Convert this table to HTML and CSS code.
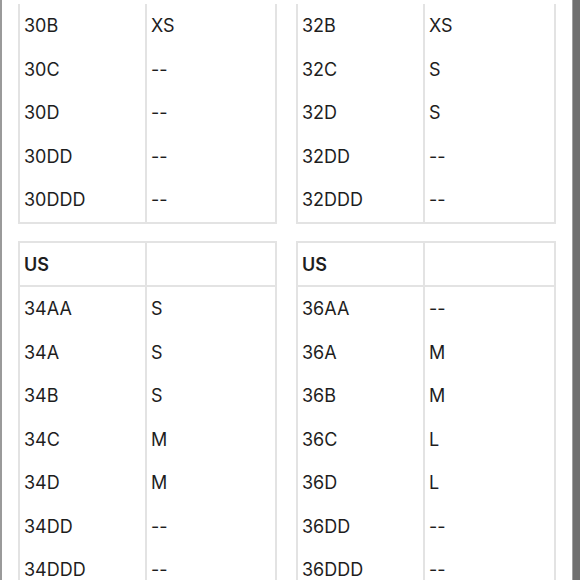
FILE: index.html
```html
<!DOCTYPE html>
<html>
<head>
<meta charset="utf-8">
<link rel="stylesheet" href="styles.css">
</head>
<body>
<div class="frame">
  <div class="edge-left"></div>
  <main class="content">
    <div class="grid">
      <div class="table cont">
        <div class="row"><div class="cell">30B</div><div class="cell">XS</div></div>
        <div class="row"><div class="cell">30C</div><div class="cell">--</div></div>
        <div class="row"><div class="cell">30D</div><div class="cell">--</div></div>
        <div class="row"><div class="cell">30DD</div><div class="cell">--</div></div>
        <div class="row"><div class="cell">30DDD</div><div class="cell">--</div></div>
      </div>
      <div class="table cont">
        <div class="row"><div class="cell">32B</div><div class="cell">XS</div></div>
        <div class="row"><div class="cell">32C</div><div class="cell">S</div></div>
        <div class="row"><div class="cell">32D</div><div class="cell">S</div></div>
        <div class="row"><div class="cell">32DD</div><div class="cell">--</div></div>
        <div class="row"><div class="cell">32DDD</div><div class="cell">--</div></div>
      </div>
      <div class="table">
        <div class="row head"><div class="cell">US</div><div class="cell"></div></div>
        <div class="row"><div class="cell">34AA</div><div class="cell">S</div></div>
        <div class="row"><div class="cell">34A</div><div class="cell">S</div></div>
        <div class="row"><div class="cell">34B</div><div class="cell">S</div></div>
        <div class="row"><div class="cell">34C</div><div class="cell">M</div></div>
        <div class="row"><div class="cell">34D</div><div class="cell">M</div></div>
        <div class="row"><div class="cell">34DD</div><div class="cell">--</div></div>
        <div class="row"><div class="cell">34DDD</div><div class="cell">--</div></div>
      </div>
      <div class="table">
        <div class="row head"><div class="cell">US</div><div class="cell"></div></div>
        <div class="row"><div class="cell">36AA</div><div class="cell">--</div></div>
        <div class="row"><div class="cell">36A</div><div class="cell">M</div></div>
        <div class="row"><div class="cell">36B</div><div class="cell">M</div></div>
        <div class="row"><div class="cell">36C</div><div class="cell">L</div></div>
        <div class="row"><div class="cell">36D</div><div class="cell">L</div></div>
        <div class="row"><div class="cell">36DD</div><div class="cell">--</div></div>
        <div class="row"><div class="cell">36DDD</div><div class="cell">--</div></div>
      </div>
    </div>
  </main>
  <div class="edge-right"></div>
</div>
</body>
</html>
```
FILE: styles.css
```css
html, body {
  margin: 0;
  padding: 0;
  background: #ffffff;
}
body {
  width: 580px;
  height: 580px;
  overflow: hidden;
  font-family: Inter, "Liberation Sans", sans-serif;
  font-size: 18px;
  color: #1e1e1e;
}
.frame {
  display: flex;
  height: 580px;
}
.edge-left {
  width: 2px;
  background: #9a9a9a;
  flex: none;
}
.edge-right {
  width: 7px;
  background: #6f6f6f;
  border-left: 1px solid #a0a0a0;
  flex: none;
}
.content {
  flex: 1;
  padding: 4px 16px 0 16px;
  box-sizing: border-box;
}
.grid {
  display: grid;
  grid-template-columns: 259px 260px;
  column-gap: 19px;
  row-gap: 17.5px;
  align-items: start;
}
.table {
  border: 2px solid #e3e3e3;
}
.table.cont {
  border-top: none;
}
.row {
  display: grid;
  grid-template-columns: 127px 1fr;
  height: 43.5px;
}
.row.head {
  height: 42px;
  border-bottom: 2px solid #e3e3e3;
  font-weight: 600;
}
.cell {
  display: flex;
  align-items: center;
  padding-left: 4px;
}
.cell:first-child {
  border-right: 2px solid #e3e3e3;
}
```
